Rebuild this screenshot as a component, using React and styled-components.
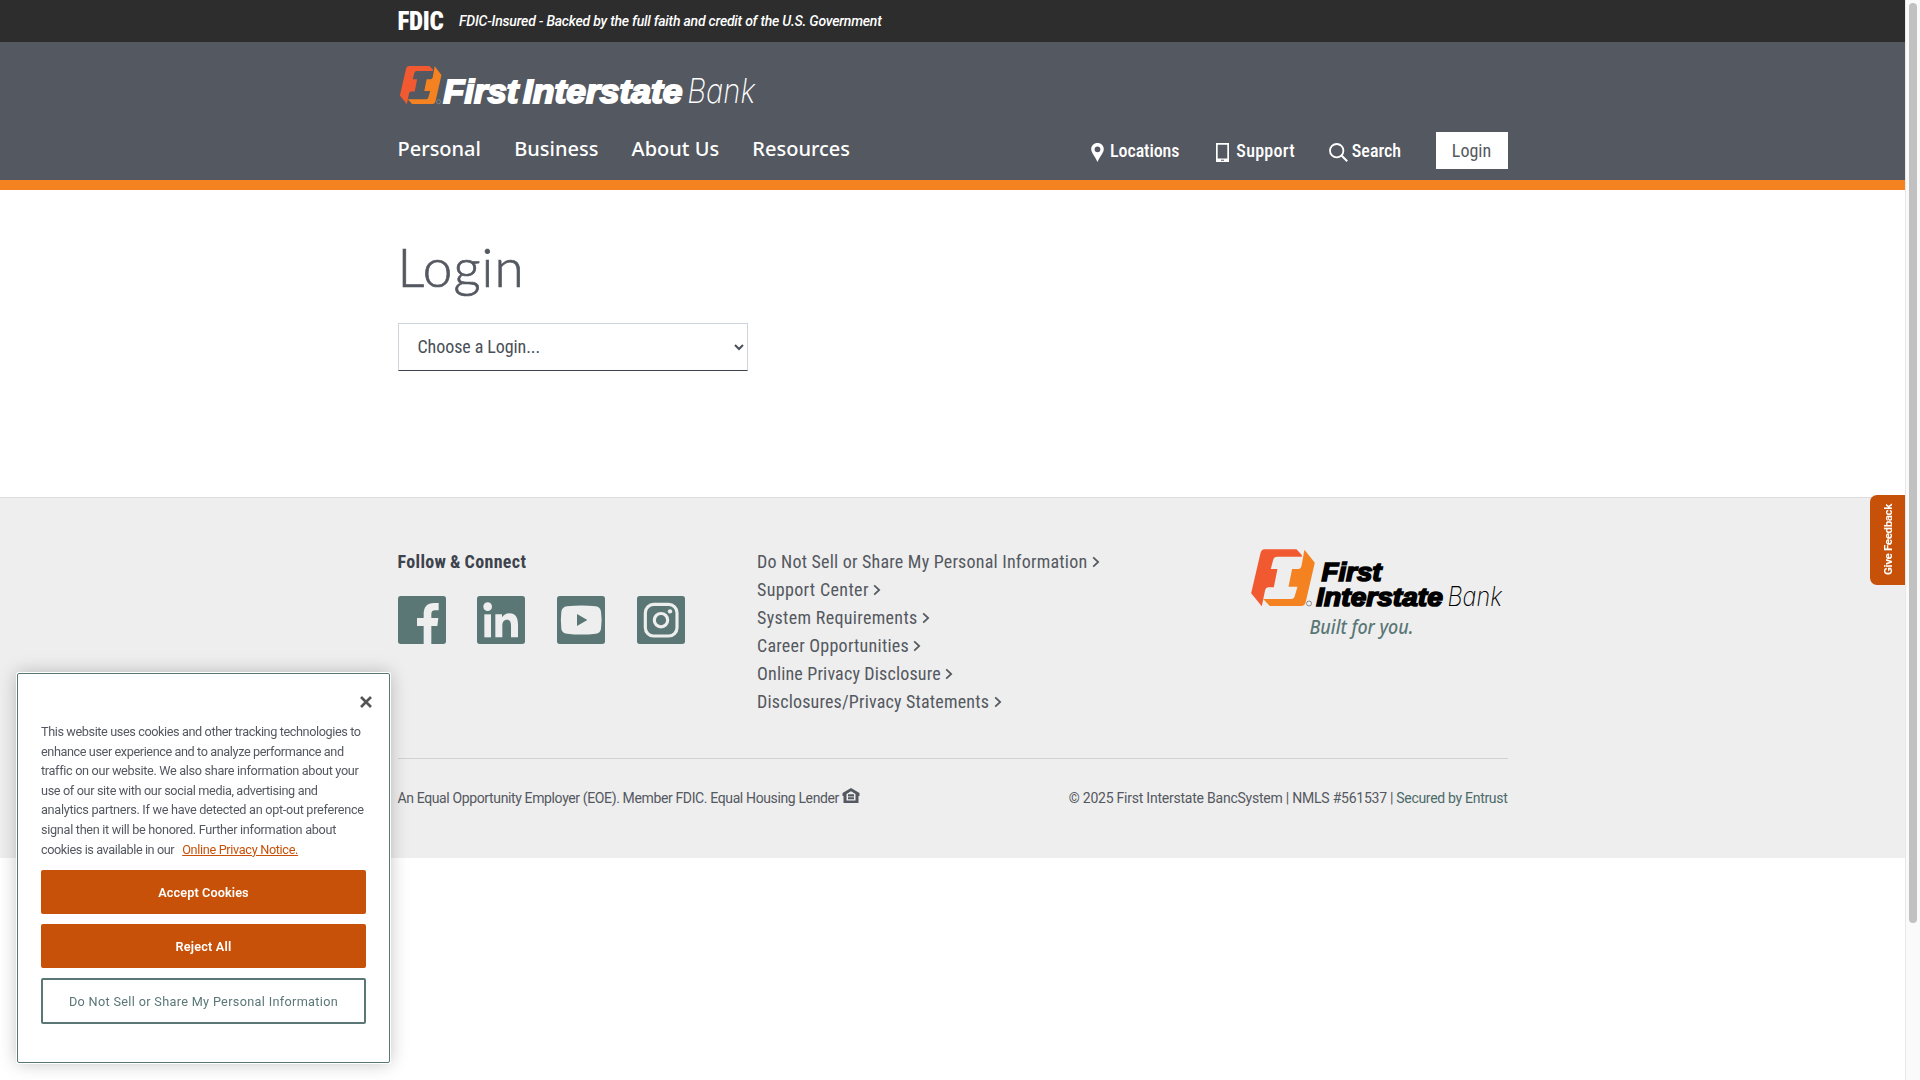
import React from 'react';
import styled, { createGlobalStyle, css } from 'styled-components';

const colors = {
  slate: '#545860',
  ink: '#3d434c',
  teal: '#5a7776',
  orange: '#f58220',
  rust: '#c75109',
  grey: '#eeeeee',
};

const GlobalStyle = createGlobalStyle`
  *, *::before, *::after { box-sizing: border-box; }
  html, body { margin: 0; height: 100%; overflow: hidden; background: #fff; }
  body {
    font-family: Roboto, "Liberation Sans", sans-serif;
    font-stretch: 75%;
    font-size: 18px;
    color: ${colors.slate};
  }
  a { color: inherit; text-decoration: none; }
`;

const Window = styled.div`
  display: flex;
  height: 1080px;
`;
const Page = styled.div`
  flex: 1;
  min-width: 0;
`;
const Container = styled.div`
  width: 1110px;
  margin: 0 auto;
`;

const spaced = css`
  letter-spacing: ${(p) => p.$ls || 0}px;
`;

/* Top bar */
const TopBar = styled.div`
  height: 42px;
  background: #2d2d2d;
  color: #fff;
`;
const TopBarInner = styled(Container)`
  display: flex;
  align-items: center;
  height: 42px;
`;
const Fdic = styled.span`
  width: 61.5px;
  padding-top: 2px;
  font: 900 25px/42px Roboto, sans-serif;
  font-stretch: 75%;
  letter-spacing: -0.3px;
`;
const Insured = styled.em`
  font-size: 14px;
  font-weight: 500;
  font-stretch: 100%;
  letter-spacing: -0.22px;
  white-space: nowrap;
`;

/* Header */
const Header = styled.header`
  height: 148px;
  background: ${colors.slate};
  border-bottom: 10px solid ${colors.orange};
  color: #fff;
`;
const LogoRow = styled.div`
  height: 90px;
  padding-top: 14px;
  svg { display: block; }
`;
const NavRow = styled.nav`
  display: flex;
  justify-content: space-between;
  height: 37px;
`;
const MainNav = styled.div`
  display: flex;
  gap: 33.2px;
  font: 500 20px/34px "Noto Sans", "Open Sans", sans-serif;
  font-stretch: 100%;
`;
const UtilityNav = styled.div`
  display: flex;
  align-items: center;
  font-weight: 500;
`;
const UtilityLink = styled.a`
  display: flex;
  align-items: center;
  gap: ${(p) => p.$gap}px;
  margin-right: ${(p) => p.$after}px;
  ${spaced}
  svg { display: block; position: relative; top: 2px; }
`;
const LoginButton = styled.a`
  width: 72px;
  height: 37px;
  background: #fff;
  color: ${colors.slate};
  font-weight: 400;
  line-height: 37px;
  text-align: center;
`;

/* Main */
const Main = styled.main`
  height: 307px;
  padding-top: 46px;
`;
const Title = styled.h1`
  margin: 0 0 25px;
  font: 300 53px/62px Lato, sans-serif;
  font-stretch: 100%;
  letter-spacing: 1.1px;
  -webkit-text-stroke: 0.7px ${colors.slate};
`;
const LoginSelect = styled.select`
  display: block;
  width: 350px;
  height: 48px;
  padding: 0 0 1px 15px;
  border: 1px solid #ced4da;
  border-bottom-color: ${colors.ink};
  border-radius: 0;
  background: #fff;
  color: #495057;
  font: inherit;
  font-stretch: 75%;
  letter-spacing: -0.08px;
`;

/* Footer */
const Footer = styled.footer`
  height: 361px;
  border-top: 1px solid #dcdcdc;
  background: ${colors.grey};
`;
const FooterTop = styled(Container)`
  display: flex;
  height: 261px;
  padding-top: 50px;
  border-bottom: 1px solid #d2d2d2;
`;
const Follow = styled.section`
  width: 359.5px;
`;
const FollowTitle = styled.h2`
  margin: 0 0 20px;
  font-size: 18px;
  font-weight: 700;
  line-height: 28px;
  letter-spacing: 0.35px;
  word-spacing: -0.8px;
  color: ${colors.ink};
`;
const Social = styled.div`
  display: grid;
  grid-template-columns: 79px 80px 80px 48px;
  svg { display: block; }
`;
const FooterLinks = styled.div`
  flex: 1;
  display: flex;
  flex-direction: column;
  line-height: 28px;
`;
const FooterLink = styled.a`
  display: flex;
  align-items: center;
  gap: 4.5px;
  ${spaced}
`;
const FooterLogo = styled.div`
  width: 257px;
  svg { display: block; overflow: visible; }
`;
const FooterBottom = styled(Container)`
  display: flex;
  justify-content: space-between;
  padding-top: 29px;
  font-size: 14px;
  font-stretch: 100%;
  line-height: 20px;
  white-space: nowrap;
`;
const Legal = styled.div`
  display: flex;
  gap: ${(p) => p.$gap}px;
  ${spaced}
  svg { display: block; }
`;
const Entrust = styled.a`
  color: #4b6a68;
  letter-spacing: -0.3px;
`;

/* Feedback tab */
const Feedback = styled.button`
  position: fixed;
  right: 15px;
  top: 495px;
  width: 35px;
  height: 90px;
  padding: 0 2px 0 0;
  border: 0;
  border-radius: 0 7px 7px 0;
  background: ${colors.rust};
  color: #fff;
  font: 700 11.5px Roboto, sans-serif;
  letter-spacing: -0.35px;
  writing-mode: vertical-rl;
  transform: rotate(180deg);
  text-align: center;
`;

/* Cookie dialog */
const Cookie = styled.section`
  position: fixed;
  left: 17px;
  top: 673px;
  width: 373px;
  height: 390px;
  padding: 48px 23px 0;
  border: 1px solid ${colors.teal};
  border-radius: 2px;
  background: #fff;
  box-shadow: 0 0 0 1px #fff, 0 0 18px rgba(0, 0, 0, 0.25);
`;
const CookieText = styled.p`
  margin: 0 0 11px;
  font-size: 12.7px;
  font-stretch: 100%;
  line-height: 19.6px;
  white-space: nowrap;
`;
const Line = styled.span`
  display: block;
  ${spaced}
`;
const PrivacyLink = styled.a`
  && { color: ${colors.rust}; text-decoration: underline; }
  margin-left: 8px;
  letter-spacing: -0.33px;
`;
const Close = styled.button`
  position: absolute;
  top: 22px;
  right: 17px;
  width: 12px;
  height: 12px;
  padding: 0;
  border: 0;
  background: none;
  svg { display: block; }
`;
const CookieButton = styled.button`
  display: block;
  width: 325px;
  height: ${(p) => (p.$outline ? 46 : 44)}px;
  margin: 0 0 10px;
  padding: 1px 0 0;
  border: ${(p) => (p.$outline ? `2px solid ${colors.teal}` : '0')};
  border-radius: 2px;
  background: ${(p) => (p.$outline ? '#fff' : colors.rust)};
  color: ${(p) => (p.$outline ? colors.teal : '#fff')};
  font: ${(p) => (p.$outline ? 400 : 600)} 12.7px Roboto, sans-serif;
  ${spaced}
`;

/* Browser scroll bar */
const ScrollTrack = styled.div`
  width: 15px;
  padding: 3px 3px 0;
  border-left: 1px solid #e8e8e8;
  background: #fafafa;
`;
const ScrollThumb = styled.div`
  width: 8px;
  height: 920px;
  border-radius: 4px;
  background: #c1c1c1;
`;

const Emblem = () => (
  <g>
    <path
      fill="#f15a31"
      d="M41 0H137L153 17V22H80Q69 22 67 32L60 59H80L69 114H52Q45 114 43 122L33 171L1 132L29 12Q32 0 41 0Z"
    />
    <path
      fill="#f58220"
      d="M161 1L192 40L165 157Q162 170 151 170H57L37 149H121Q130 149 132 140L140 112H113L124 59H142Q150 59 152 50Z"
    />
  </g>
);

const heavy = {
  fontFamily: '"Liberation Sans", Arial, sans-serif',
  fontWeight: 700,
  fontStyle: 'italic',
  lengthAdjust: 'spacingAndGlyphs',
};
const thin = {
  fontFamily: 'Inter, "Liberation Sans", sans-serif',
  fontWeight: 200,
  fontStyle: 'italic',
  lengthAdjust: 'spacingAndGlyphs',
};

const HeaderLogo = () => (
  <svg width="380" height="60" viewBox="398 56 380 60">
    <g transform="translate(399.7 66) scale(0.2175 0.2235)">
      <Emblem />
    </g>
    <circle cx="438.5" cy="101.8" r="2" fill="none" stroke="#8d9096" strokeWidth="0.7" />
    <g fill="#fff">
      <g stroke="#fff" strokeWidth="1.9">
        <text {...heavy} x="443.3" y="102.8" fontSize="33.2" textLength="75">First</text>
        <text {...heavy} x="523" y="102.8" fontSize="33.2" textLength="159.5">Interstate</text>
      </g>
      <text {...thin} x="687.3" y="103.3" fontSize="34" textLength="68">Bank</text>
    </g>
  </svg>
);

const FooterLogoArt = () => (
  <svg width="257" height="98" viewBox="1251 548 257 98">
    <g transform="translate(1250.8 549.3) scale(0.3333)">
      <Emblem />
    </g>
    <circle cx="1309" cy="603.5" r="2.5" fill="none" stroke="#666" strokeWidth="0.7" />
    <g fill="#000">
      <g stroke="#000" strokeWidth="1.6">
        <text {...heavy} x="1321.5" y="581.3" fontSize="26" textLength="60">First</text>
        <text {...heavy} x="1316.3" y="605.5" fontSize="26" textLength="126.5">Interstate</text>
      </g>
      <text {...thin} x="1447.5" y="606" fontSize="26.8" textLength="54.5">Bank</text>
    </g>
    <text
      x="1309.5"
      y="634"
      fontFamily='"Noto Sans", sans-serif'
      fontStyle="italic"
      fontWeight="500"
      fontSize="19.5"
      textLength="104"
      lengthAdjust="spacingAndGlyphs"
      fill={colors.teal}
    >
      Built for you.
    </text>
  </svg>
);

const PinIcon = () => (
  <svg width="13" height="19" viewBox="0 0 13 19">
    <path
      fill="#fff"
      fillRule="evenodd"
      d="M6.500 0C2.900 0 .2 2.700 .2 6.100C.2 9.800 3.600 12.600 6.500 19C9.400 12.600 12.800 9.800 12.800 6.100C12.800 2.700 10.100 0 6.500 0ZM6.500 3.400a2.900 2.900 0 1 1 0 5.800a2.900 2.900 0 1 1 0-5.800Z"
    />
  </svg>
);
const PhoneIcon = () => (
  <svg width="13" height="19" viewBox="0 0 13 19">
    <path fill="#fff" fillRule="evenodd" d="M0 0H13V19H0ZM1.700 1.700V15.500H11.300V1.700ZM5 16.700V17.700H8V16.700Z" />
  </svg>
);
const SearchIcon = () => (
  <svg width="19" height="19" viewBox="0 0 19 19" fill="none" stroke="#fff" strokeWidth="1.8">
    <circle cx="7.7" cy="7.7" r="6.7" />
    <path d="M12.500 12.500L18.200 18.200" strokeWidth="2" />
  </svg>
);
const Chevron = () => (
  <svg width="8" height="12" viewBox="0 0 8 12" fill="none" stroke={colors.slate} strokeWidth="1.7">
    <path d="M1.200 1.400L6.200 6L1.200 10.600" />
  </svg>
);
const HouseIcon = () => (
  <svg width="18" height="15" viewBox="0 0 18 15">
    <path
      fill={colors.slate}
      fillRule="evenodd"
      d="M9 0L17.500 5V8H16.500V15H1.500V8H.5V5ZM9 3.200L4.500 6V12.500H13.500V6ZM6 6.300H12V8.400H6ZM6 9.200H12V11.300H6Z"
    />
  </svg>
);

const Tile = ({ children, label }) => (
  <svg width="48" height="48" viewBox="0 0 144 144" role="img" aria-label={label}>
    <rect width="144" height="144" rx="8" fill={colors.teal} />
    {children}
  </svg>
);

const mainNav = ['Personal', 'Business', 'About Us', 'Resources'];
const footerLinks = [
  ['Do Not Sell or Share My Personal Information', 0.21],
  ['Support Center', 0.35],
  ['System Requirements', 0.33],
  ['Career Opportunities', 0.24],
  ['Online Privacy Disclosure', 0.17],
  ['Disclosures/Privacy Statements', 0.18],
];
const cookieLines = [
  ['This website uses cookies and other tracking technologies to', -0.4],
  ['enhance user experience and to analyze performance and', -0.41],
  ['traffic on our website. We also share information about your', -0.33],
  ['use of our site with our social media, advertising and', -0.36],
  ['analytics partners. If we have detected an opt-out preference', -0.3],
  ['signal then it will be honored. Further information about', -0.3],
];

export default function App() {
  return (
    <>
      <GlobalStyle />
      <Window>
        <Page>
          <TopBar>
            <TopBarInner>
              <Fdic>FDIC</Fdic>
              <Insured>FDIC-Insured - Backed by the full faith and credit of the U.S. Government</Insured>
            </TopBarInner>
          </TopBar>

          <Header>
            <Container>
              <LogoRow>
                <HeaderLogo />
              </LogoRow>
              <NavRow>
                <MainNav>
                  {mainNav.map((item) => (
                    <a key={item}>{item}</a>
                  ))}
                </MainNav>
                <UtilityNav>
                  <UtilityLink $gap={6.5} $after={37} $ls={-0.1}>
                    <PinIcon />
                    Locations
                  </UtilityLink>
                  <UtilityLink $gap={7} $after={34} $ls={0.25}>
                    <PhoneIcon />
                    Support
                  </UtilityLink>
                  <UtilityLink $gap={4} $after={34.4} $ls={0}>
                    <SearchIcon />
                    Search
                  </UtilityLink>
                  <LoginButton>Login</LoginButton>
                </UtilityNav>
              </NavRow>
            </Container>
          </Header>

          <Main>
            <Container>
              <Title>Login</Title>
              <LoginSelect defaultValue="">
                <option value="">Choose a Login...</option>
              </LoginSelect>
            </Container>
          </Main>

          <Footer>
            <FooterTop>
              <Follow>
                <FollowTitle>Follow &amp; Connect</FollowTitle>
                <Social>
                  <Tile label="Facebook">
                    <path
                      fill={colors.grey}
                      d="M77 144V90H57V66H77V54C77 32 88 21 108 21H122V43H111C103 43 100 47 100 55V66H121L118 90H100V144Z"
                    />
                  </Tile>
                  <Tile label="LinkedIn">
                    <g fill={colors.grey}>
                      <circle cx="32" cy="32" r="13" />
                      <path d="M22 55H42V124H22Z" />
                      <path d="M55 55H75V64C79 57 87 52 97 52C116 52 123 65 123 86V124H102V90C102 78 99 71 90 71C80 71 76 78 76 90V124H55Z" />
                    </g>
                  </Tile>
                  <Tile label="YouTube">
                    <path
                      fill={colors.grey}
                      d="M30 31Q73 26 116 31Q130 33 132 47Q136 73 132 98Q130 111 116 113Q73 118 30 113Q15 111 13 98Q10 73 13 47Q15 33 30 31Z"
                    />
                    <path fill={colors.teal} d="M60 54L91 72L60 90Z" />
                  </Tile>
                  <Tile label="Instagram">
                    <g fill="none" stroke={colors.grey} strokeWidth="9.5">
                      <rect x="25" y="25" width="95" height="95" rx="25" />
                      <circle cx="72" cy="72.5" r="20" />
                    </g>
                    <circle cx="99" cy="46" r="6.5" fill={colors.grey} />
                  </Tile>
                </Social>
              </Follow>
              <FooterLinks>
                {footerLinks.map(([label, ls]) => (
                  <FooterLink key={label} $ls={ls}>
                    {label}
                    <Chevron />
                  </FooterLink>
                ))}
              </FooterLinks>
              <FooterLogo>
                <FooterLogoArt />
              </FooterLogo>
            </FooterTop>
            <FooterBottom>
              <Legal $gap={2.6} $ls={-0.37}>
                <span>An Equal Opportunity Employer (EOE). Member FDIC. Equal Housing Lender</span>
                <HouseIcon />
              </Legal>
              <Legal $gap={3} $ls={-0.23}>
                <span>© 2025 First Interstate BancSystem | NMLS #561537 |</span>
                <Entrust>Secured by Entrust</Entrust>
              </Legal>
            </FooterBottom>
          </Footer>
        </Page>
        <ScrollTrack>
          <ScrollThumb />
        </ScrollTrack>
      </Window>

      <Feedback>Give Feedback</Feedback>

      <Cookie>
        <Close aria-label="Close">
          <svg width="12" height="12" viewBox="0 0 12 12" stroke="#545454" strokeWidth="2.6">
            <path d="M1 1L11 11M11 1L1 11" />
          </svg>
        </Close>
        <CookieText>
          {cookieLines.map(([line, ls]) => (
            <Line key={line} $ls={ls}>
              {line}
            </Line>
          ))}
          <Line $ls={-0.42}>
            cookies is available in our
            <PrivacyLink>Online Privacy Notice.</PrivacyLink>
          </Line>
        </CookieText>
        <CookieButton $ls={0.1}>Accept Cookies</CookieButton>
        <CookieButton $ls={0.2}>Reject All</CookieButton>
        <CookieButton $outline $ls={0.32}>
          Do Not Sell or Share My Personal Information
        </CookieButton>
      </Cookie>
    </>
  );
}
